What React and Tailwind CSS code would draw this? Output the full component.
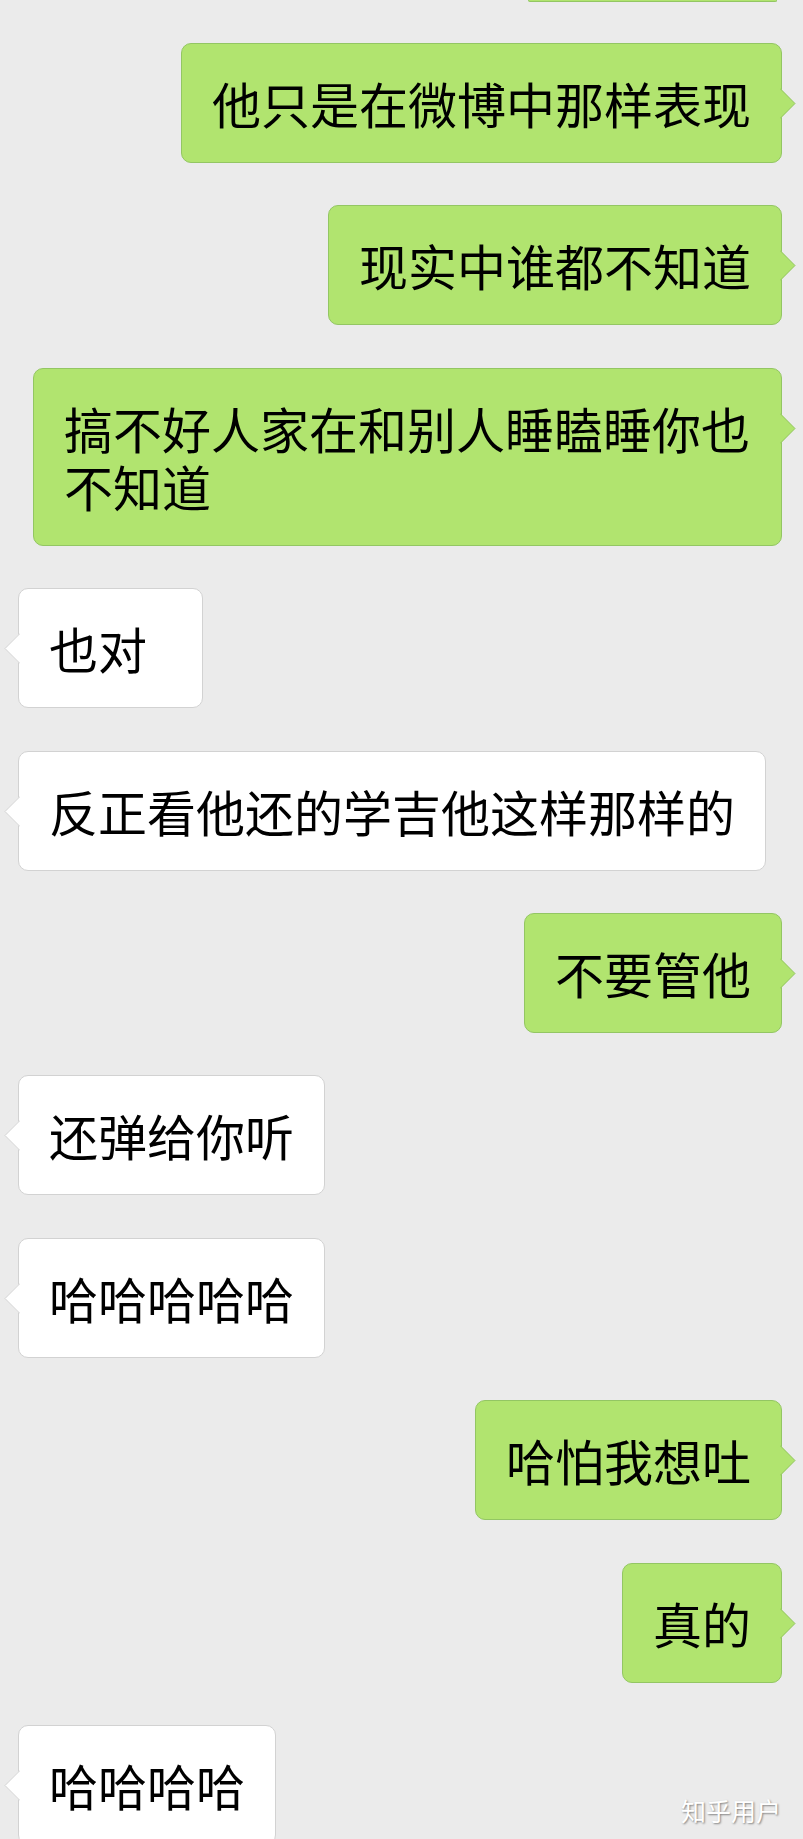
const GREEN = '#b1e46f';
const GREEN_BORDER = '#93c663';
const WHITE_BORDER = '#d2d2d2';

// chat log, in order
const messages = [
  { side: 'right', text: '他只是在微博中那样表现' },
  { side: 'right', text: '现实中谁都不知道' },
  { side: 'right', text: '搞不好人家在和别人睡瞌睡你也不知道' },
  { side: 'left', text: '也对', wide: true },
  { side: 'left', text: '反正看他还的学吉他这样那样的' },
  { side: 'right', text: '不要管他' },
  { side: 'left', text: '还弹给你听' },
  { side: 'left', text: '哈哈哈哈哈' },
  { side: 'right', text: '哈怕我想吐' },
  { side: 'right', text: '真的' },
  { side: 'left', text: '哈哈哈哈' },
];

// little arrow on the side of a bubble
const Tail = ({ side }) => {
  const right = side === 'right';
  const fill = right ? GREEN : '#ffffff';
  const stroke = right ? GREEN_BORDER : WHITE_BORDER;
  return (
    <svg
      width="16"
      height="32"
      viewBox="0 0 16 32"
      className={right ? 'absolute top-[44px] right-[-15px]' : 'absolute top-[44px] left-[-15px]'}
    >
      {right ? (
        <>
          <polygon points="0,0 15,15.5 0,31" fill={fill} />
          <polyline points="0,0.5 15,15.5 0,30.5" fill="none" stroke={stroke} strokeWidth="1" />
        </>
      ) : (
        <>
          <polygon points="16,0 1,15.5 16,31" fill={fill} />
          <polyline points="16,0.5 1,15.5 16,30.5" fill="none" stroke={stroke} strokeWidth="1" />
        </>
      )}
    </svg>
  );
};

const Bubble = ({ side, text, wide }) => {
  const right = side === 'right';
  return (
    <div className={right ? 'flex justify-end pr-[21px]' : 'flex justify-start pl-[18px]'}>
      <div
        className={
          'relative max-w-[749px] rounded-[10px] border px-[30px] py-[30px] text-[49px] leading-[58px] text-black ' +
          (right ? 'bg-[#b1e46f] border-[#93c663]' : 'bg-white border-[#d2d2d2]') +
          (wide ? ' min-w-[185px]' : '')
        }
      >
        {text}
        <Tail side={side} />
      </div>
    </div>
  );
};

export default function App() {
  return (
    <div
      className="relative h-[1839px] w-full overflow-hidden bg-[#ebebeb]"
      style={{ fontFamily: '"Noto Sans CJK SC", "Noto Sans", sans-serif' }}
    >
      {/* bottom edge of the previous green bubble */}
      <div className="flex justify-end pr-[26px]">
        <div className="h-[2px] w-[249px] rounded-b-[6px] border-x border-b border-[#93c663] bg-[#b1e46f]" />
      </div>

      <div className="flex flex-col gap-[42.4px] pt-[41px]">
        {messages.map((m, i) => (
          <Bubble key={i} {...m} />
        ))}
      </div>

      {/* watermark */}
      <div className="absolute right-[22px] bottom-[14px] text-[25px] leading-[30px] text-white [text-shadow:1px_1px_2px_rgba(0,0,0,0.45)]">
        知乎用户
      </div>
    </div>
  );
}
